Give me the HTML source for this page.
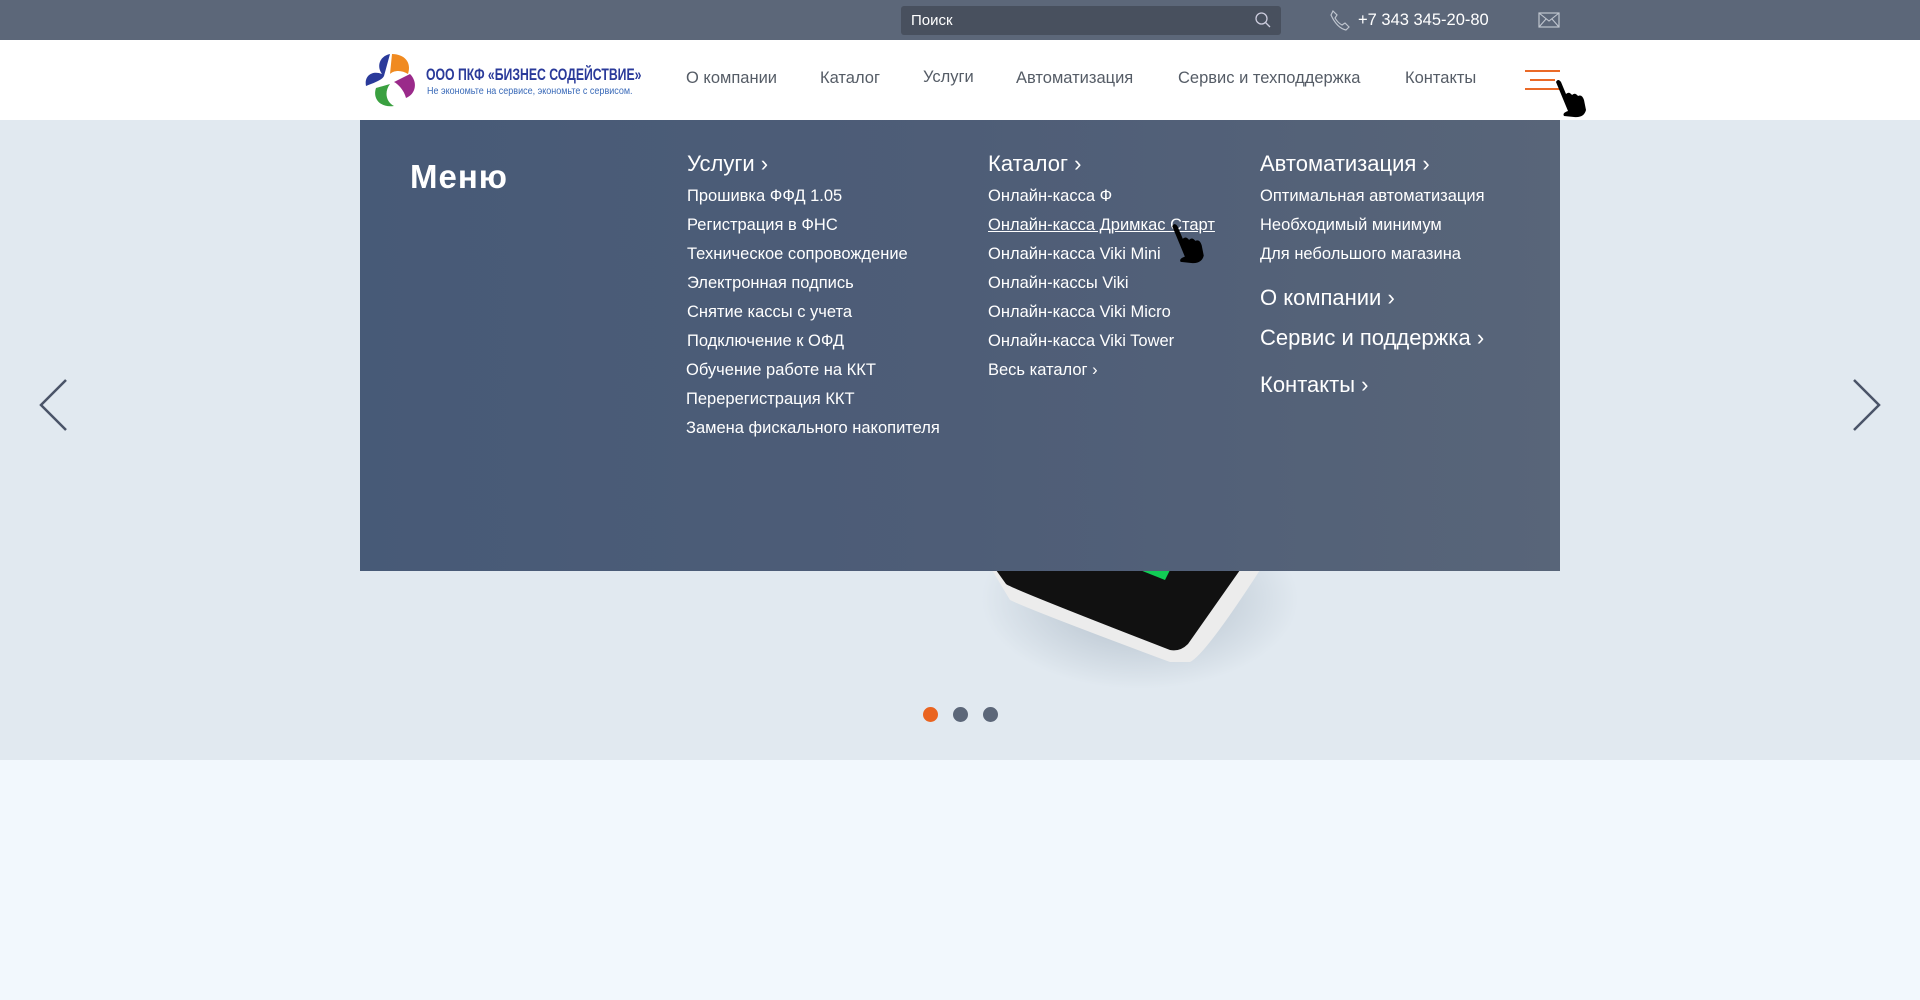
<!DOCTYPE html>
<html><head><meta charset="utf-8"><style>
*{margin:0;padding:0;box-sizing:border-box}
body{width:1920px;height:1000px;overflow:hidden;background:#f2f8fd;font-family:"Liberation Sans","DejaVu Sans",sans-serif;position:relative}
.a{position:absolute;white-space:nowrap}
.top{left:0;top:0;width:1920px;height:40px;background:#5c6779}
.hdr{left:0;top:40px;width:1920px;height:80px;background:#fff}
.slide{left:0;top:120px;width:1920px;height:640px;background:#e1e9f0}
.panel{left:360px;top:120px;width:1200px;height:451px;background:linear-gradient(90deg,#475a77 0%,#4e5d77 50%,#586579 100%)}
.nav{top:69px;font-size:16.5px;color:#555c66}
.w{color:#fff}
.h{font-size:22px;color:#fff}
.it{font-size:16.5px;color:#fff}
.dot{width:15px;height:15px;border-radius:50%;top:707px;background:#5c6779}
</style></head><body>
<div class="a top"></div>
<div class="a" style="left:901px;top:6px;width:380px;height:29px;background:#48505e;border-radius:3px"></div>
<div class="a w" style="left:911px;top:12px;font-size:15px">Поиск</div>
<svg class="a" style="left:1254px;top:11px" width="18" height="18" viewBox="0 0 18 18"><circle cx="7.5" cy="7.5" r="5.5" fill="none" stroke="#ccd" stroke-width="1.3"/><line x1="11.5" y1="11.5" x2="16" y2="16" stroke="#ccd" stroke-width="1.3"/></svg>
<svg class="a" style="left:1329px;top:9px" width="22" height="22" viewBox="0 0 22 22"><path d="M4 2 L8 6 L6 9 Q9 14 13 16 L16 14 L20 18 L17 21 Q8 19 2 6 Z" fill="none" stroke="#bfc5cf" stroke-width="1.2"/></svg>
<div class="a w" style="left:1358px;top:11px;font-size:16.5px">+7 343 345-20-80</div>
<svg class="a" style="left:1538px;top:12px" width="22" height="16" viewBox="0 0 22 16"><rect x="1" y="1" width="20" height="14" fill="none" stroke="#bfc5cf" stroke-width="1.2"/><path d="M1 1 L11 9 L21 1 M1 15 L8 7 M21 15 L14 7" fill="none" stroke="#bfc5cf" stroke-width="1.1"/></svg>
<div class="a hdr"></div>
<svg class="a" style="left:362px;top:52px" width="58" height="56" viewBox="0 0 58 56"><path d="M28 2 C18 4 14 14 20 22 C10 18 2 24 4 34 C14 30 20 28 22 24 Z" fill="#2a3a9a"/><path d="M30 2 C42 2 50 10 46 22 C40 18 32 18 28 22 Z" fill="#f08a20"/><path d="M48 22 C56 30 54 42 44 46 C42 38 36 32 32 30 Z" fill="#9a2a8a"/><path d="M28 32 C22 40 24 50 32 54 C20 56 10 48 14 36 Z" fill="#3aa040"/></svg>
<div class="a" style="left:426px;top:65px;font-size:17px;font-weight:bold;color:#2a3a9a;transform:scaleX(0.72);transform-origin:left">ООО ПКФ «БИЗНЕС СОДЕЙСТВИЕ»</div>
<div class="a" style="left:427px;top:86px;font-size:10px;color:#3a6ab8;transform:scaleX(0.9);transform-origin:left">Не экономьте на сервисе, экономьте с сервисом.</div>
<div class="a nav" style="left:686px">О компании</div>
<div class="a nav" style="left:820px">Каталог</div>
<div class="a nav" style="left:923px;top:68px">Услуги</div>
<div class="a nav" style="left:1016px">Автоматизация</div>
<div class="a nav" style="left:1178px">Сервис и техподдержка</div>
<div class="a nav" style="left:1405px">Контакты</div>
<div class="a" style="left:1525px;top:70px;width:35px;height:2px;background:#ea6a28"></div>
<div class="a" style="left:1530px;top:79px;width:25px;height:2px;background:#ea6a28"></div>
<div class="a" style="left:1525px;top:88px;width:35px;height:2px;background:#ea6a28"></div>
<svg class="a" style="left:1552px;top:78px" width="38" height="40" viewBox="0 0 38 40"><path d="M4 4 Q6 0 9 4 L14 16 Q17 13 20 17 Q23 14 26 18 Q30 16 32 22 L34 32 Q32 40 22 39 L12 38 Q10 35 16 33 Z" fill="#000"/></svg>
<div class="a slide"></div>
<div class="a" style="left:980px;top:560px;width:320px;height:130px;background:radial-gradient(ellipse at 50% 30%,rgba(150,165,180,.7),rgba(225,233,240,0) 70%)"></div>
<svg class="a" style="left:990px;top:560px" width="300" height="110" viewBox="0 0 300 110"><path d="M2 10 L20 40 Q40 50 180 102 L200 102 Q215 95 270 10 Z" fill="#ececec"/><path d="M6 10 L16 24 Q20 28 180 90 Q190 92 198 84 L250 10 Z" fill="#111"/><path d="M150 10 L175 20 L180 10 Z" fill="#1c5"/></svg>
<div class="a panel"></div>
<div class="a w" style="left:410px;top:158px;font-size:33px;font-weight:bold;letter-spacing:1px">Меню</div>
<div class="a h" style="left:687px;top:151px">Услуги ›</div>
<div class="a it" style="left:687px;top:187px">Прошивка ФФД 1.05</div>
<div class="a it" style="left:687px;top:216px">Регистрация в ФНС</div>
<div class="a it" style="left:687px;top:245px">Техническое сопровождение</div>
<div class="a it" style="left:687px;top:274px">Электронная подпись</div>
<div class="a it" style="left:687px;top:303px">Снятие кассы с учета</div>
<div class="a it" style="left:687px;top:332px">Подключение к ОФД</div>
<div class="a it" style="left:686px;top:361px">Обучение работе на ККТ</div>
<div class="a it" style="left:686px;top:390px">Перерегистрация ККТ</div>
<div class="a it" style="left:686px;top:419px">Замена фискального накопителя</div>
<div class="a h" style="left:988px;top:151px">Каталог ›</div>
<div class="a it" style="left:988px;top:187px">Онлайн-касса Ф</div>
<div class="a it" style="left:988px;top:216px;text-decoration:underline">Онлайн-касса Дримкас Старт</div>
<div class="a it" style="left:988px;top:245px">Онлайн-касса Viki Mini</div>
<div class="a it" style="left:988px;top:274px">Онлайн-кассы Viki</div>
<div class="a it" style="left:988px;top:303px">Онлайн-касса Viki Micro</div>
<div class="a it" style="left:988px;top:332px">Онлайн-касса Viki Tower</div>
<div class="a it" style="left:988px;top:361px">Весь каталог ›</div>
<svg class="a" style="left:1168px;top:222px" width="40" height="42" viewBox="0 0 38 40"><path d="M4 4 Q6 0 9 4 L14 16 Q17 13 20 17 Q23 14 26 18 Q30 16 32 22 L34 32 Q32 40 22 39 L12 38 Q10 35 16 33 Z" fill="#000"/></svg>
<div class="a h" style="left:1260px;top:151px">Автоматизация ›</div>
<div class="a it" style="left:1260px;top:187px">Оптимальная автоматизация</div>
<div class="a it" style="left:1260px;top:216px">Необходимый минимум</div>
<div class="a it" style="left:1260px;top:245px">Для небольшого магазина</div>
<div class="a h" style="left:1260px;top:285px">О компании ›</div>
<div class="a h" style="left:1260px;top:325px">Сервис и поддержка ›</div>
<div class="a h" style="left:1260px;top:372px">Контакты ›</div>
<svg class="a" style="left:38px;top:378px" width="30" height="54" viewBox="0 0 30 54"><path d="M28 2 L3 27 L28 52" fill="none" stroke="#4a5468" stroke-width="2.5"/></svg>
<svg class="a" style="left:1852px;top:378px" width="30" height="54" viewBox="0 0 30 54"><path d="M2 2 L27 27 L2 52" fill="none" stroke="#4a5468" stroke-width="2.5"/></svg>
<div class="a dot" style="left:923px;background:#ea6420"></div>
<div class="a dot" style="left:953px"></div>
<div class="a dot" style="left:983px"></div>
</body></html>
